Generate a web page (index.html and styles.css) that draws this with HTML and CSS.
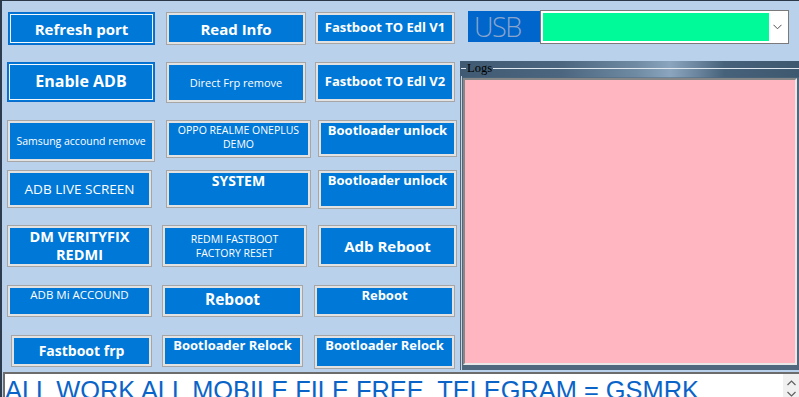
FILE: index.html
```html
<!DOCTYPE html>
<html>
<head>
<meta charset="utf-8">
<link rel="stylesheet" href="styles.css">
</head>
<body>
<div class="window">
  <div class="main">
    <div class="pad">
      <div class="btn focus b-refresh">Refresh port</div>
      <div class="btn b-read">Read Info</div>
      <div class="btn b-edl1">Fastboot TO Edl V1</div>

      <div class="btn focus b-enable">Enable ADB</div>
      <div class="btn b-direct">Direct Frp remove</div>
      <div class="btn b-edl2">Fastboot TO Edl V2</div>

      <div class="btn b-samsung">Samsung accound remove</div>
      <div class="btn top b-oppo">OPPO REALME ONEPLUS<br>DEMO</div>
      <div class="btn top b-unlock1">Bootloader unlock</div>

      <div class="btn b-live">ADB LIVE SCREEN</div>
      <div class="btn top b-system">SYSTEM</div>
      <div class="btn top b-unlock2">Bootloader unlock</div>

      <div class="btn top b-dm">DM VERITYFIX<br>REDMI</div>
      <div class="btn b-redmi">REDMI FASTBOOT<br>FACTORY RESET</div>
      <div class="btn b-adbreboot">Adb Reboot</div>

      <div class="btn top b-mi">ADB Mi ACCOUND</div>
      <div class="btn b-reboot2">Reboot</div>
      <div class="btn top b-reboot3">Reboot</div>

      <div class="btn b-frp">Fastboot frp</div>
      <div class="btn top b-relock2">Bootloader Relock</div>
      <div class="btn top b-relock3">Bootloader Relock</div>
    </div>
    <div class="side">
      <div class="usb-row">
        <div class="usb-label">USB</div>
        <div class="combo">
          <div class="combo-value"></div>
          <div class="combo-arrow">
            <svg width="9" height="6" viewBox="0 0 9 6"><polyline points="0.5,0.8 4.5,4.8 8.5,0.8" fill="none" stroke="#505050" stroke-width="1"/></svg>
          </div>
        </div>
      </div>
      <div class="logs">
        <div class="logs-head">
          <span class="rule-a"></span><span class="legend">Logs</span><span class="rule-b"></span>
        </div>
        <div class="logs-body">
          <div class="logbox"></div>
        </div>
      </div>
    </div>
  </div>
  <div class="ticker">
    <div class="ticker-text">ALL WORK ALL MOBILE FILE FREE&nbsp; TELEGRAM = GSMRK</div>
    <div class="vscroll">
      <svg width="9" height="6" viewBox="0 0 9 6"><polyline points="0.5,5 4.5,1 8.5,5" fill="none" stroke="#606060" stroke-width="1.2"/></svg>
      <svg width="9" height="6" viewBox="0 0 9 6"><polyline points="0.5,1 4.5,5 8.5,1" fill="none" stroke="#606060" stroke-width="1.2"/></svg>
    </div>
  </div>
</div>
</body>
</html>
```
FILE: styles.css
```css
html, body {
  margin: 0;
  padding: 0;
  background: #b9d1ea;
}

.window {
  box-sizing: border-box;
  width: 799px;
  height: 397px;
  overflow: hidden;
  background: #b9d1ea;
  border-top: 1px solid #2a3848;
  border-left: 2px solid #2c3c4e;
  font-family: "Open Sans", "Noto Sans", sans-serif;
}

.main {
  display: flex;
  height: 370px;
}

/* button grid */
.pad {
  display: grid;
  grid-template-columns: 155px 152px 146px;
  grid-template-rows: 50px 58px 50px 55px 60px 50px 36px;
  margin-left: 5px;
  padding-top: 11px;
}

.btn {
  box-sizing: border-box;
  align-self: start;
  justify-self: start;
  display: flex;
  align-items: center;
  justify-content: center;
  text-align: center;
  background: #0078d7;
  color: #ffffff;
  border: 1px solid #a6a6a6;
  box-shadow: inset 0 0 0 2px #e2e2e2;
  line-height: 1.2;
  white-space: nowrap;
  font-size: 13px;
  font-weight: 700;
}

.btn.top {
  align-items: flex-start;
  padding-top: 2px;
}

.btn.focus {
  border: 1px solid #0a6ccc;
  box-shadow: inset 0 0 0 1px #0078d7, inset 0 0 0 2px #f4f8fc;
}

.b-refresh { margin-left: 1px; width: 147px; height: 33px; font-size: 15px; }
.b-read { margin-left: 4px; width: 140px; height: 33px; font-size: 15px; }
.b-edl1 { margin-left: 1px; width: 140px; height: 32px; font-size: 13px; }

.b-enable { width: 148px; height: 40px; font-size: 16px; }
.b-direct { margin-left: 4px; width: 140px; height: 41px; font-size: 11px; font-weight: 400; }
.b-edl2 { margin-left: 1px; width: 140px; height: 40px; font-size: 13px; }

.b-samsung { width: 148px; height: 42px; font-size: 10.5px; font-weight: 400; }
.b-oppo { margin-left: 4px; width: 145px; height: 38px; font-size: 10.5px; font-weight: 400; line-height: 14px; padding-top: 4px; }
.b-unlock1 { margin-left: 4px; width: 139px; height: 37px; font-size: 13px; padding-top: 2px; }

.b-live { width: 145px; height: 38px; font-size: 13.5px; font-weight: 400; }
.b-system { margin-left: 4px; width: 145px; height: 38px; font-size: 14px; padding-top: 2px; }
.b-unlock2 { margin-left: 4px; width: 139px; height: 39px; font-size: 13px; padding-top: 2px; }

.b-dm { width: 145px; height: 42px; font-size: 14.5px; line-height: 18px; padding-top: 3px; }
.b-redmi { width: 145px; height: 42px; font-size: 10.5px; font-weight: 400; line-height: 14px; }
.b-adbreboot { margin-left: 4px; width: 139px; height: 42px; font-size: 15px; }

.b-mi { width: 145px; height: 32px; font-size: 11.5px; font-weight: 400; padding-top: 3px; }
.b-reboot2 { width: 141px; height: 32px; font-size: 15.5px; padding-bottom: 3px; }
.b-reboot3 { width: 141px; height: 32px; font-size: 13px; padding-top: 1px; }

.b-frp { margin-left: 4px; width: 141px; height: 32px; font-size: 14px; }
.b-relock2 { width: 141px; height: 32px; font-size: 13px; padding-top: 1px; }
.b-relock3 { width: 141px; height: 34px; font-size: 13px; padding-top: 1px; }

/* right side */
.side {
  width: 339px;
  display: flex;
  flex-direction: column;
}

.usb-row {
  display: flex;
  align-items: flex-start;
  padding-top: 9px;
}

.usb-label {
  box-sizing: border-box;
  margin-left: 8px;
  margin-top: 1px;
  width: 72px;
  height: 31px;
  background: #0066cc;
  color: #8aa4cb;
  font-family: "Open Sans", sans-serif;
  font-weight: 300;
  font-size: 27px;
  letter-spacing: -1.5px;
  line-height: 31px;
  padding-left: 6px;
}

.combo {
  box-sizing: border-box;
  width: 249px;
  height: 34px;
  background: #ffffff;
  border: 1px solid #7a7a7a;
  padding: 2px;
  display: flex;
}

.combo-value {
  width: 226px;
  height: 28px;
  background: #00fa9a;
}

.combo-arrow {
  flex: 1;
  display: flex;
  align-items: center;
  justify-content: center;
}

.logs {
  box-sizing: border-box;
  margin-top: 17px;
  height: 309px;
  background:
    linear-gradient(180deg, rgba(0,0,0,0) 0px, rgba(0,0,0,0) 16px, #4f687d 17px, #4f687d 100%),
    linear-gradient(90deg, #3f5a72 0%, #4b667e 30%, #6f8aa3 52%, #8aa5bd 62%, #6a859d 70%, #46617a 78%, #3e586f 100%);
  display: flex;
  flex-direction: column;
}

.logs-head {
  display: flex;
  align-items: center;
  height: 15px;
  margin-left: 1px;
}

.rule-a {
  width: 5px;
  height: 1px;
  background: #dfe6ed;
}

.rule-b {
  flex: 1;
  height: 1px;
  background: #dfe6ed;
}

.legend {
  font-family: "Liberation Serif", serif;
  font-size: 12.5px;
  line-height: 15px;
  color: #000000;
  padding: 0 1px;
}

.logs-body {
  flex: 1;
  margin-left: 1px;
  padding: 2px 2px 5px 1px;
  border-left: 1px solid #c9d3dd;
  display: flex;
}

.logbox {
  box-sizing: border-box;
  flex: 1;
  background: #ffb6c1;
  border: 2px solid;
  border-color: #878787 #e8e8e8 #e8e8e8 #878787;
}

/* bottom ticker */
.ticker {
  box-sizing: border-box;
  margin-top: 1px;
  margin-left: 1px;
  height: 26px;
  background: #ffffff;
  border-top: 2px solid #6c6c6c;
  border-left: 2px solid #6c6c6c;
  display: flex;
}

.ticker-text {
  flex: 1;
  padding: 2px 0 0 0;
  font-family: "Liberation Sans", Arial, sans-serif;
  font-size: 25.4px;
  line-height: 28px;
  color: #0a64c8;
  white-space: nowrap;
  overflow: hidden;
}

.vscroll {
  width: 16px;
  background: #f0f0f0;
  display: flex;
  flex-direction: column;
  align-items: center;
  justify-content: flex-start;
  gap: 5px;
  padding-top: 6px;
}
```
